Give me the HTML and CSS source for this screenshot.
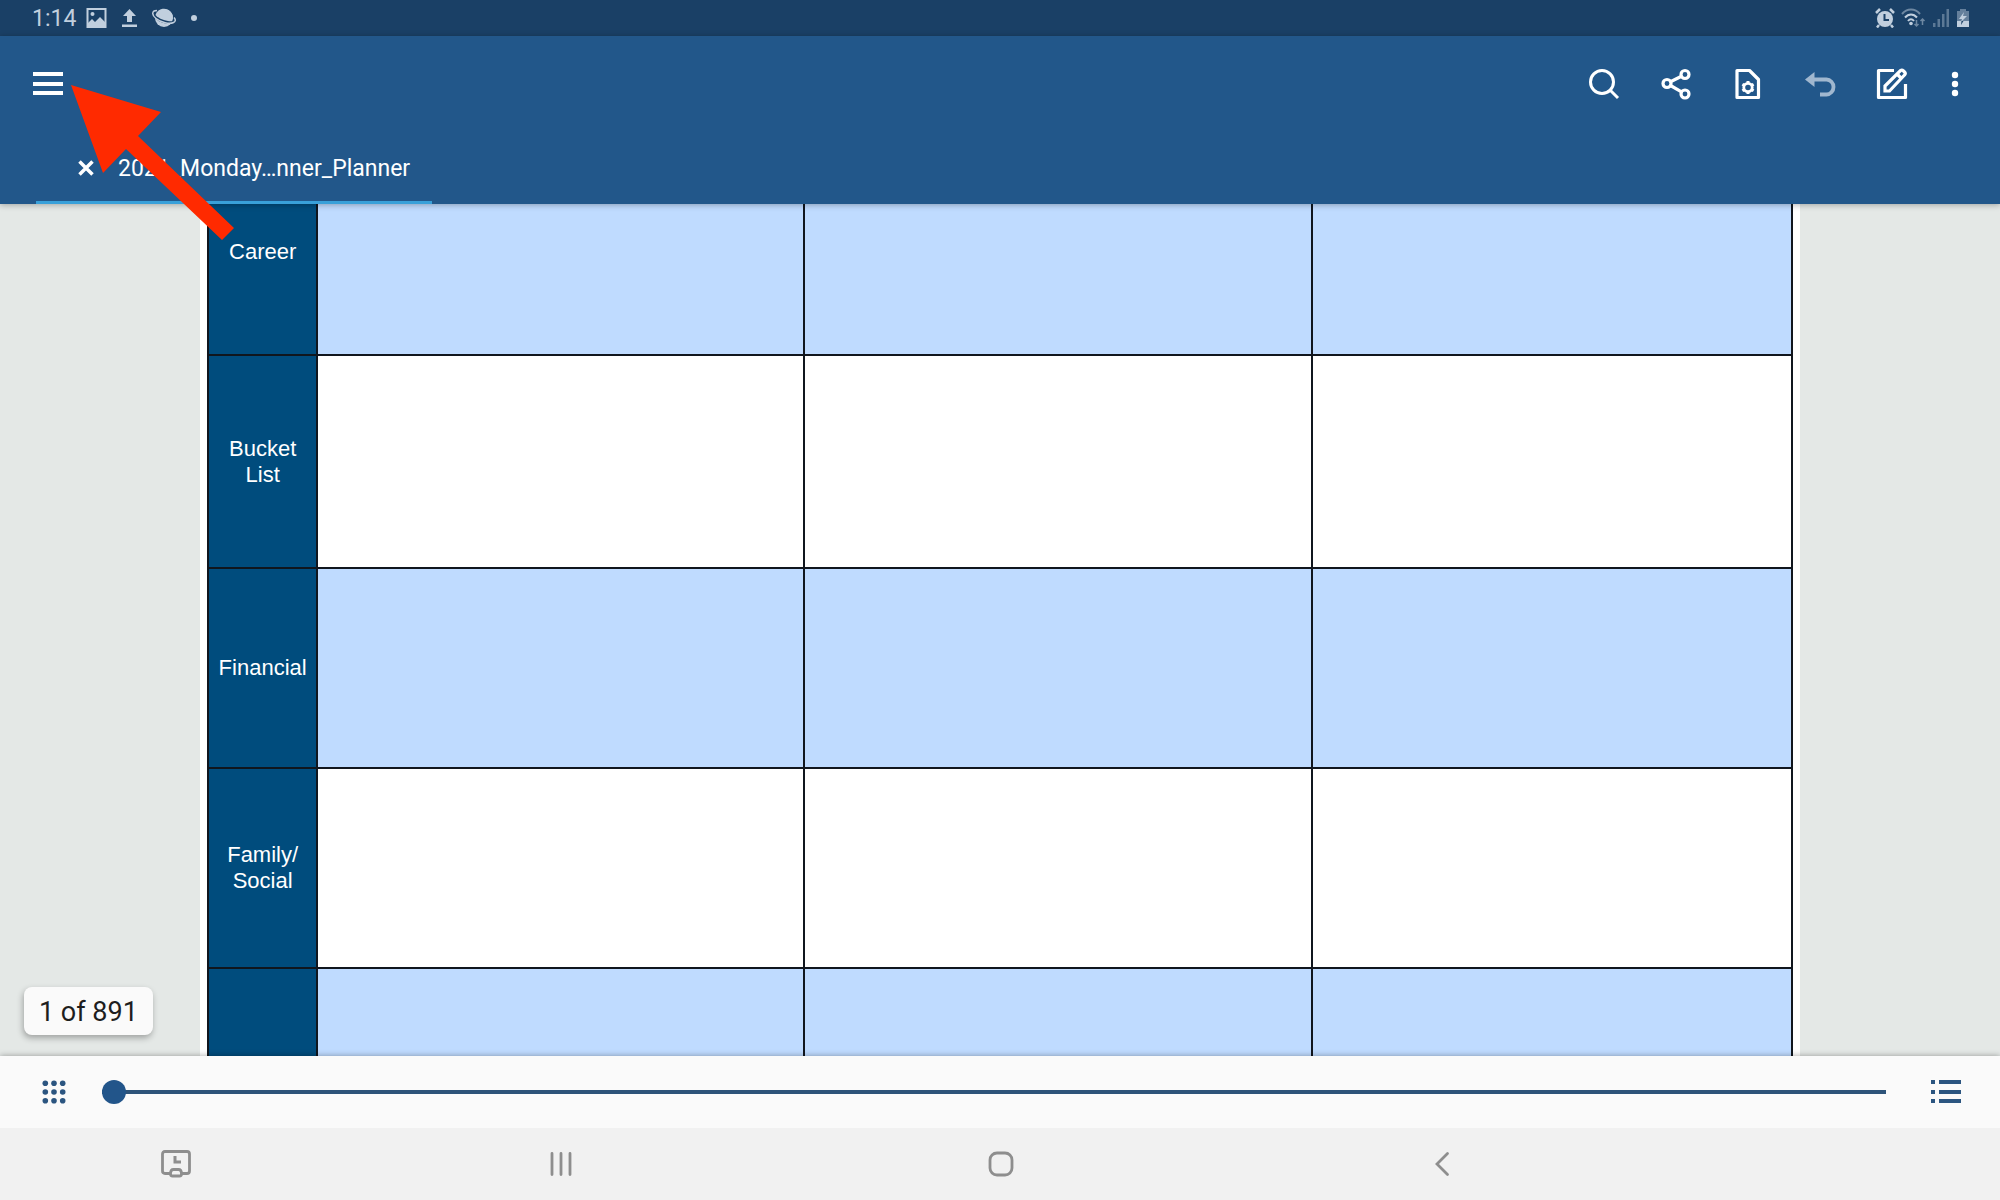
FILE: index.html
```html
<!DOCTYPE html>
<html lang="en">
<head>
    <meta charset="UTF-8">
    <meta name="viewport" content="width=device-width, initial-scale=1.0">
    <title>2021_Monday…nner_Planner</title>
    <link rel="stylesheet" href="styles.css">
</head>
<body>

<div class="status-bar">
    <div class="status-left">
        <span class="clock">1:14</span>
        <svg class="picture-icon" width="21" height="20" viewBox="0 0 21 20">
            <path fill="none" stroke="currentColor" stroke-width="2" d="M1.5 1h18v18h-18z"/>
            <circle cx="6.500" cy="6" r="2" fill="currentColor"/>
            <path fill="currentColor" d="M2 18v-3l4-4 3 3 5-5 6 6v3z"/>
        </svg>
        <svg class="upload-icon" width="15" height="18" viewBox="0 0 15 18">
            <path fill="currentColor" d="M7.500 0L14 7h-4v6H5V7H1zM0 15.500h15V18H0z"/>
        </svg>
        <svg class="planet-icon" width="24" height="20" viewBox="0 0 24 20">
            <circle cx="12" cy="10" r="9" fill="currentColor"/>
            <ellipse class="ring-gap" cx="12" cy="9.500" rx="11" ry="5.500" transform="rotate(22 12 9.500)"/>
            <path fill="currentColor" d="M3.500 7C5 3 8 .800 12 .800c5 0 9 4 9 9 0 1.500-.500 2.500-1 3.500C14 13.500 7 11 3.500 7z"/>
            <path fill="none" stroke="currentColor" stroke-width="1.500" d="M5 2.500C-.500 2.500-.500 7 4 10.500c5 4 13.500 6 17.500 4 3-1.500 1.500-4 .500-5"/>
        </svg>
        <svg width="6" height="20" viewBox="0 0 6 20"><circle cx="3" cy="10" r="3" fill="currentColor"/></svg>
    </div>
    <div class="status-right">
        <svg width="20" height="20" viewBox="0 0 20 20">
            <circle cx="10" cy="11" r="8" fill="currentColor"/>
            <path fill="none" stroke="currentColor" stroke-width="2.500" d="M1 5l4-4M19 5l-4-4M4 17l-2 2.500M16 17l2 2.500"/>
            <path class="clock-hands" d="M9.500 6v6h4.500"/>
        </svg>
        <svg width="25" height="20" viewBox="0 0 25 20">
            <g fill="none" stroke="currentColor" stroke-width="2">
                <path opacity=".5" d="M1 6c5-6 13-6 18 0"/>
                <path d="M4 9.500c3.500-4 8.500-4 12 0M7 13c2-2.500 4-2.500 6 0"/>
            </g>
            <circle cx="10" cy="15.500" r="1.800" fill="currentColor"/>
            <path opacity=".5" fill="none" stroke="currentColor" stroke-width="1.500" d="M15.500 12v6M13.500 16l2 2 2-2M21.500 17v-6M19.500 13l2-2 2 2"/>
        </svg>
        <svg width="18" height="20" viewBox="0 0 18 20">
            <g fill="currentColor" opacity=".4">
                <path d="M1 15h2.500v4H1zM5.500 11H8v8H5.500zM10 6h2.500v13H10zM14.500 1H17v18h-2.500z"/>
            </g>
        </svg>
        <svg width="14" height="20" viewBox="0 0 14 20">
            <path fill="currentColor" opacity=".45" d="M4 1h6v2h3v10H1V3h3z"/>
            <path fill="currentColor" d="M1 13h12v6H1z"/>
            <path fill="currentColor" d="M8 4l-5 7h3l-1 3 6-6H7z"/>
            <path fill="#1a3f63" d="M5.500 13h2L5 17z"/>
        </svg>
    </div>
</div>

<header class="app-header">
    <div class="toolbar">
        <button class="icon-button menu" aria-label="Menu">
            <svg width="30" height="24" viewBox="0 0 30 24"><path fill="currentColor" d="M0 0h30v4H0zM0 10h30v4H0zM0 19h30v4H0z"/></svg>
        </button>
        <div class="actions">
            <button class="icon-button" aria-label="Search">
                <svg width="36" height="36" viewBox="0 0 36 36">
                    <g fill="none" stroke="currentColor" stroke-width="3"><circle cx="16" cy="16" r="11.500"/><path d="M24 24l8 8"/></g>
                </svg>
            </button>
            <button class="icon-button" aria-label="Share">
                <svg width="36" height="36" viewBox="0 0 36 36">
                    <g fill="none" stroke="currentColor" stroke-width="3.200">
                        <circle cx="9" cy="17.500" r="4"/><circle cx="27" cy="8.500" r="4"/><circle cx="27" cy="28" r="4"/>
                        <path d="M12.500 15.700l11-5.500M12.500 19.500l11 6.300"/>
                    </g>
                </svg>
            </button>
            <button class="icon-button" aria-label="Page settings">
                <svg width="36" height="36" viewBox="0 0 36 36">
                    <path fill="none" stroke="currentColor" stroke-width="3.200" stroke-linejoin="round" d="M7 4.500h12.500l9 9v18H7z"/>
                    <circle cx="18" cy="21.500" r="4.200" fill="none" stroke="currentColor" stroke-width="2.800"/>
                    <path stroke="currentColor" stroke-width="3" d="M18 15v2.500M18 25.500v2.500M12.400 18.200l2.200 1.300M21.400 23.500l2.200 1.300M12.400 24.800l2.200-1.300M21.400 19.500l2.200-1.300"/>
                </svg>
            </button>
            <button class="icon-button" aria-label="Undo" disabled>
                <svg width="36" height="36" viewBox="0 0 36 36">
                    <path fill="currentColor" d="M3 13.500L12.500 6v15z"/>
                    <path fill="none" stroke="currentColor" stroke-width="3.800" d="M12 13.500h12.500a7 7.500 0 0 1 0 15H18"/>
                </svg>
            </button>
            <button class="icon-button" aria-label="Edit">
                <svg width="36" height="36" viewBox="0 0 36 36">
                    <g fill="none" stroke="currentColor" stroke-width="3.200" stroke-linejoin="round">
                        <path d="M20 4.500H4.500v27h27V18"/>
                        <path stroke-linejoin="miter" d="M11 25v-5L26.500 4.500q1.500-1 3 .5l1 1q1.500 1.500 0 3L15.500 25z"/>
                        <path d="M23 8l5 5"/>
                    </g>
                </svg>
            </button>
            <button class="icon-button more" aria-label="More options">
                <svg width="8" height="26" viewBox="0 0 8 26"><g fill="currentColor"><circle cx="4" cy="4" r="3.200"/><circle cx="4" cy="13" r="3.200"/><circle cx="4" cy="22" r="3.200"/></g></svg>
            </button>
        </div>
    </div>
    <div class="tabs">
        <div class="tab">
            <button class="close" aria-label="Close tab">
                <svg width="16" height="16" viewBox="0 0 16 16"><path fill="none" stroke="currentColor" stroke-width="3.500" d="M1.500 1.500l13 13M14.500 1.500l-13 13"/></svg>
            </button>
            <a class="tab-title" href="#planner">2021_Monday…nner_Planner</a>
        </div>
    </div>
    <!-- Pointer to the menu button -->
    <svg class="arrow" width="164" height="156" viewBox="0 0 164 156">
        <path fill="#ff2a00" d="M0 0l90 27-23 24 96 92-12 12-96-91-23 24z"/>
    </svg>
</header>

<main class="viewer">
    <div class="page" id="planner">
        <table class="goals">
            <colgroup>
                <col class="col-label">
                <col class="col-first">
                <col class="col-second">
                <col>
            </colgroup>
            <tbody>
                <tr class="shaded"><th scope="row">Career</th><td></td><td></td><td></td></tr>
                <tr class="tall"><th scope="row">Bucket<br>List</th><td></td><td></td><td></td></tr>
                <tr class="shaded"><th scope="row">Financial</th><td></td><td></td><td></td></tr>
                <tr><th scope="row">Family/<br>Social</th><td></td><td></td><td></td></tr>
                <tr class="shaded"><th scope="row"></th><td></td><td></td><td></td></tr>
            </tbody>
        </table>
    </div>
    <div class="page-count">1 of 891</div>
</main>

<div class="page-bar">
    <button class="icon-button small" aria-label="Thumbnails">
        <svg width="24" height="24" viewBox="0 0 24 24">
            <g fill="currentColor">
                <circle cx="3.300" cy="3.300" r="2.800"/><circle cx="12" cy="3.300" r="2.800"/><circle cx="20.700" cy="3.300" r="2.800"/>
                <circle cx="3.300" cy="12" r="2.800"/><circle cx="12" cy="12" r="2.800"/><circle cx="20.700" cy="12" r="2.800"/>
                <circle cx="3.300" cy="20.700" r="2.800"/><circle cx="12" cy="20.700" r="2.800"/><circle cx="20.700" cy="20.700" r="2.800"/>
            </g>
        </svg>
    </button>
    <input class="page-slider" type="range" min="1" max="891" value="1" aria-label="Page">
    <button class="icon-button small" aria-label="Outline">
        <svg width="32" height="24" viewBox="0 0 32 24"><path fill="currentColor" d="M1 0h4v4H1zM9 0h22v4H9zM1 10h4v4H1zM9 10h22v4H9zM1 19h4v4H1zM9 19h22v4H9z"/></svg>
    </button>
</div>

<nav class="nav-bar">
    <button class="icon-button" aria-label="Screen history">
        <svg width="30" height="28" viewBox="0 0 30 28">
            <g fill="none" stroke="currentColor" stroke-width="2.800">
                <path d="M10 23.500H4q-2.500 0-2.500-2.500V4q0-2.500 2.500-2.500h22q2.500 0 2.500 2.500v17q0 2.500-2.500 2.500h-6"/>
                <path d="M9.500 24q0-4.500 3-4.500h5q3 0 3 4.500 0 2-2 2h-7q-2 0-2-2z"/>
                <path stroke-width="3" d="M14 6v6h6"/>
            </g>
        </svg>
    </button>
    <button class="icon-button" aria-label="Recents">
        <svg width="22" height="24" viewBox="0 0 22 24"><path fill="none" stroke="currentColor" stroke-width="2.800" stroke-linecap="round" d="M2 1.500v21M11 1.500v21M20 1.500v21"/></svg>
    </button>
    <button class="icon-button" aria-label="Home">
        <svg width="26" height="26" viewBox="0 0 26 26"><rect x="2" y="2" width="22" height="22" rx="7" fill="none" stroke="currentColor" stroke-width="2.800"/></svg>
    </button>
    <button class="icon-button" aria-label="Back">
        <svg width="16" height="26" viewBox="0 0 16 26"><path fill="none" stroke="currentColor" stroke-width="2.800" stroke-linecap="round" d="M13.500 2.500L3 13l10.500 10.500"/></svg>
    </button>
</nav>

</body>
</html>
```
FILE: styles.css
```css
* {
    box-sizing: border-box;
}
body {
    margin: 0;
    height: 100vh;
    display: flex;
    flex-direction: column;
    font-family: Roboto, sans-serif;
    background-color: #f1f1f1;
    overflow: hidden;
}
svg {
    display: block;
}
button {
    font: inherit;
    color: inherit;
    background: none;
    border: none;
    padding: 0;
    cursor: pointer;
}
.status-bar {
    height: 36px;
    flex: none;
    display: flex;
    justify-content: space-between;
    align-items: center;
    padding: 0 30px 0 32px;
    background-color: #1a4066;
    color: #c1cfde;
}
.status-left {
    display: flex;
    align-items: center;
    gap: 15px;
}
.status-right {
    display: flex;
    align-items: center;
    gap: 6px;
}
.clock {
    padding-top: 2px;
    font-size: 23px;
    line-height: 34px;
    margin-right: -5px;
}
.ring-gap {
    fill: #1a4066;
}
.clock-hands {
    fill: none;
    stroke: #1a4066;
    stroke-width: 2;
}
.app-header {
    position: relative;
    z-index: 2;
    flex: none;
    background-color: #22578a;
    color: #fff;
    box-shadow: 0 1px 6px rgba(0, 0, 0, 0.3);
}
.toolbar {
    height: 96px;
    display: flex;
    justify-content: space-between;
    align-items: center;
    padding: 0 18px 0 12px;
}
.actions {
    display: flex;
}
.icon-button {
    width: 72px;
    height: 72px;
    display: flex;
    justify-content: center;
    align-items: center;
}
.icon-button.more {
    width: 54px;
}
.icon-button.small {
    width: 36px;
    height: 36px;
}
.icon-button:disabled {
    color: #a0b7cf;
    cursor: default;
}
.tabs {
    height: 72px;
    display: flex;
    padding-left: 36px;
}
.tab {
    display: flex;
    align-items: center;
    gap: 24px;
    padding: 3px 22px 0 42px;
    border-bottom: 3px solid #39a0d9;
}
.tab-title {
    color: inherit;
    font-size: 23px;
    line-height: 28px;
    padding-top: 2px;
    text-decoration: none;
}
.arrow {
    position: absolute;
    left: 71px;
    top: 49px;
    pointer-events: none;
}
.viewer {
    position: relative;
    flex: 1;
    min-height: 0;
    overflow: hidden;
    background-color: #e4e8e6;
}
/* The page is scrolled part of the way into its first row */
.page {
    width: 80%;
    margin: -57px auto 0;
    padding: 0 7px;
    background-color: #fff;
}
.goals {
    width: 100%;
    table-layout: fixed;
    border-collapse: collapse;
}
.col-label {
    width: 6.9%;
}
.col-first {
    width: 30.7%;
}
.col-second {
    width: 32.1%;
}
.goals tr {
    height: 200px;
}
.goals tr:first-child {
    height: 207px;
}
.goals .tall {
    height: 213px;
}
.goals th,
.goals td {
    padding: 0;
    border: 2px solid #10161e;
    background-color: #fff;
}
.goals .shaded td {
    background-color: #bfdbff;
}
.goals th {
    background-color: #004c7d;
    color: #fff;
    font-family: "Liberation Sans", Arial, sans-serif;
    font-size: 22px;
    font-weight: normal;
    line-height: 26px;
}
.page-count {
    position: absolute;
    left: 24px;
    bottom: 21px;
    padding: 2px 15px 0;
    border-radius: 8px;
    background-color: #fafafa;
    color: #1e1e1e;
    font-size: 27px;
    line-height: 46px;
    box-shadow: -1px 3px 6px rgba(0, 0, 0, 0.3);
}
.page-bar {
    position: relative;
    height: 72px;
    flex: none;
    display: flex;
    align-items: center;
    gap: 30px;
    padding: 0 36px;
    background-color: #fafafa;
    color: #2b5580;
    box-shadow: 0 0 6px rgba(0, 0, 0, 0.35);
}
.page-slider {
    appearance: none;
    flex: 1;
    height: 24px;
    margin: 0 12px 0 0;
    background: none;
}
.page-slider::-webkit-slider-runnable-track {
    height: 4px;
    background-color: #2d5379;
}
.page-slider::-webkit-slider-thumb {
    appearance: none;
    width: 24px;
    height: 24px;
    margin-top: -10px;
    border-radius: 50%;
    background-color: #22558a;
}
.nav-bar {
    position: relative;
    height: 72px;
    flex: none;
    display: grid;
    grid-template-columns: 330px 1fr 1fr 1fr;
    justify-items: center;
    padding: 0 338px 0 11px;
    background-color: #f1f1f1;
    color: #8e8e8e;
}
```
